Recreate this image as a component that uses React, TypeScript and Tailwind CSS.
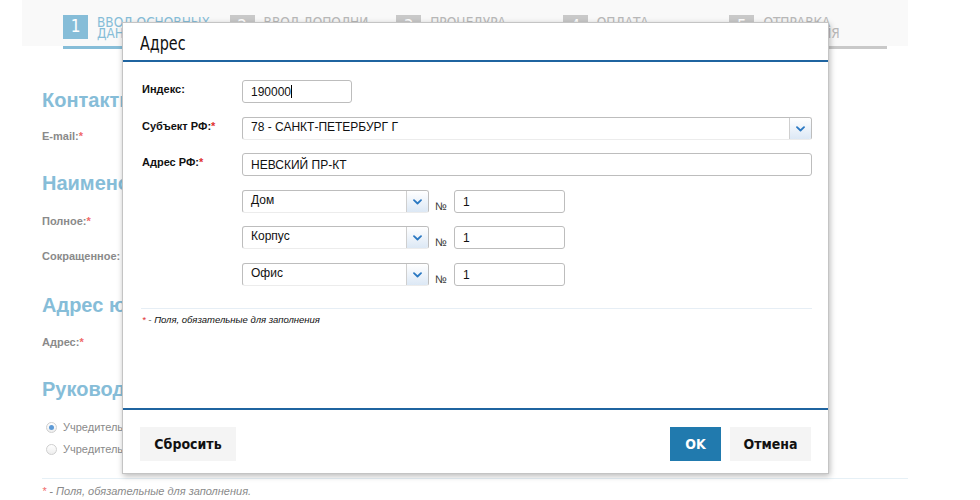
import React from "react";

const narrow = "font-['Liberation_Sans_Narrow','DejaVu_Sans_Condensed','Liberation_Sans',sans-serif]";

function Chevron() {
  return (
    <svg width="9" height="6" viewBox="0 0 9 6" fill="none">
      <path d="M1 1.2 L4.5 4.5 L8 1.2" stroke="#2a78c2" strokeWidth="1.8" strokeLinecap="round" strokeLinejoin="round" />
    </svg>
  );
}

function Select({ value, width }: { value: string; width: string }) {
  return (
    <div className={`${width} h-[23px] flex border border-[#bdbdbd] border-b-[#ececec] rounded-[3px] bg-white`}>
      <div className="flex-1 pl-[8px] text-[12px] leading-[19px] text-[#111]">{value}</div>
      <div className="w-[22px] border-l border-[#cfcfcf] rounded-r-[2px] bg-linear-to-b from-white to-[#dce8f5] flex items-center justify-center">
        <Chevron />
      </div>
    </div>
  );
}

function Input({ value, width, caret }: { value: string; width: string; caret?: boolean }) {
  return (
    <div className={`${width} h-[23px] flex items-center border border-[#bdbdbd] rounded-[3px] bg-white pl-[8px] text-[12px] leading-[14px] text-[#111]`}>
      <span>{value}</span>
      {caret && <span className="w-px h-[13px] bg-black" />}
    </div>
  );
}

function Label({ text, req }: { text: string; req?: boolean }) {
  return (
    <div className="w-[100px] pt-[2px] text-[11px] leading-[14px] font-bold text-[#111]">
      {text}
      {req && <span className="text-[#e0312f]">*</span>}
    </div>
  );
}

function NumRow({ sel, mt }: { sel: string; mt: string }) {
  return (
    <div className={`flex ${mt}`}>
      <div className="w-[100px]" />
      <Select value={sel} width="w-[187px]" />
      <div className="ml-[6px] w-[19px] pt-[9px] text-[11px] leading-[14px] text-[#333]">№</div>
      <Input value="1" width="w-[111px]" />
    </div>
  );
}

function Step({ n, lines, active }: { n: string; lines: string[]; active?: boolean }) {
  return (
    <div className="flex">
      <div
        className={`w-[25px] h-[24px] flex items-center justify-center text-white text-[17px] ${narrow} ${
          active ? "bg-[#86bdd8]" : "bg-[#c9c9c9]"
        }`}
      >
        {n}
      </div>
      <div
        className={`ml-[9px] text-[13.5px] leading-[11px] pt-[2px] uppercase ${narrow} ${
          active ? "text-[#86bdd8]" : "text-[#b8b8b8]"
        }`}
      >
        {lines.map((l, i) => (
          <div key={i}>{l}</div>
        ))}
      </div>
    </div>
  );
}

function BgLabel({ text, req, mt }: { text: string; req?: boolean; mt: string }) {
  return (
    <div className={`${mt} text-[11px] leading-[14px] font-bold text-[#8a8a8a]`}>
      {text}
      {req && <span className="text-[#f06a6a]">*</span>}
    </div>
  );
}

function BgHeading({ text, mt }: { text: string; mt: string }) {
  return <div className={`${mt} text-[20px] leading-[24px] font-bold text-[#86bdd8]`}>{text}</div>;
}

function Radio({ checked, mt }: { checked?: boolean; mt: string }) {
  return (
    <div className={`${mt} flex items-center h-[14px] pl-[4px] text-[11px] text-[#8a8a8a]`}>
      <div className="w-[11px] h-[11px] rounded-full border border-[#cfcfcf] bg-linear-to-b from-white to-[#eeeeee] flex items-center justify-center">
        {checked && <div className="w-[5px] h-[5px] rounded-full bg-[#5d9ad6]" />}
      </div>
      <span className="ml-[6px]">Учредитель — физическое лицо</span>
    </div>
  );
}

export default function App() {
  return (
    <div className="relative w-[980px] h-[500px] overflow-hidden bg-white font-['Liberation_Sans',Arial,sans-serif]">
      {/* background page */}
      <div className="ml-[22px] w-[886px] h-[46px] bg-[#f9f9f9] pt-[15px] pl-[41px]">
        <div className="grid grid-cols-5 w-[833px]">
          <Step n="1" lines={["Ввод основных", "данных"]} active />
          <Step n="2" lines={["Ввод дополни-", "тельных данных"]} />
          <Step n="3" lines={["Процедура", ""]} />
          <Step n="4" lines={["Оплата", ""]} />
          <Step n="5" lines={["Отправка", "заявления"]} />
        </div>
      </div>
      <div className="ml-[63px] w-[824px] h-[3px] flex">
        <div className="w-[160px] bg-[#86bdd8]" />
        <div className="flex-1 bg-[#c9c9c9]" />
      </div>
      <div className="ml-[42px] w-[866px]">
        <BgHeading text="Контактная информация" mt="mt-[39px]" />
        <BgLabel text="E-mail:" req mt="mt-[17px]" />
        <BgHeading text="Наименование" mt="mt-[28px]" />
        <BgLabel text="Полное:" req mt="mt-[19px]" />
        <BgLabel text="Сокращенное:" mt="mt-[21px]" />
        <BgHeading text="Адрес юридический" mt="mt-[30px]" />
        <BgLabel text="Адрес:" req mt="mt-[18px]" />
        <BgHeading text="Руководитель" mt="mt-[28px]" />
        <Radio checked mt="mt-[19px]" />
        <Radio mt="mt-[8px]" />
        <div className="mt-[22px] h-px bg-[#e6f0f6]" />
        <div className="mt-[5px] text-[11px] leading-[14px] italic text-[#8a8a8a]">
          <span className="text-[#f06a6a]">*</span> - Поля, обязательные для заполнения.
        </div>
      </div>

      {/* modal */}
      <div className="absolute left-[122px] top-[22px] w-[707px] h-[452px] bg-white border border-[#c4c4c4] shadow-[1px_2px_6px_rgba(0,0,0,0.28)] flex flex-col">
        <div className="h-[39px] border-b-2 border-[#1f64a0] pl-[17px] pt-[4px] flex items-center">
          <span className={`${narrow} text-[19px] text-[#111] inline-block scale-x-[0.84] origin-left`}>Адрес</span>
        </div>
        <div className="flex-1 pl-[19px] pr-[16px] pt-[18px]">
          <div className="flex">
            <Label text="Индекс:" />
            <Input value="190000" width="w-[110px]" caret />
          </div>
          <div className="flex mt-[14px]">
            <Label text="Субъект РФ:" req />
            <Select value="78 - САНКТ-ПЕТЕРБУРГ Г" width="w-[570px]" />
          </div>
          <div className="flex mt-[13px]">
            <Label text="Адрес РФ:" req />
            <Input value="НЕВСКИЙ ПР-КТ" width="w-[570px]" />
          </div>
          <NumRow sel="Дом" mt="mt-[14px]" />
          <NumRow sel="Корпус" mt="mt-[13px]" />
          <NumRow sel="Офис" mt="mt-[14px]" />
          <div className="mt-[22px] h-px bg-[#e6eef5] w-[671px] -ml-[1px]" />
          <div className="mt-[5px] text-[9.5px] leading-[12px] italic text-[#111]">
            <span className="text-[#e0312f]">*</span> - Поля, обязательные для заполнения
          </div>
        </div>
        <div className="h-[65px] border-t-2 border-[#1f64a0] px-[17px] pt-[17px] flex">
          <button className={`w-[96px] h-[34px] bg-[#f4f4f4] font-bold text-[14px] text-[#111] ${narrow}`}>Сбросить</button>
          <div className="flex-1" />
          <button className={`w-[51px] h-[34px] bg-[#217aae] font-bold text-[14px] text-white ${narrow}`}>OK</button>
          <button className={`ml-[9px] w-[81px] h-[34px] bg-[#f4f4f4] font-bold text-[14px] text-[#111] ${narrow}`}>Отмена</button>
        </div>
      </div>
    </div>
  );
}
